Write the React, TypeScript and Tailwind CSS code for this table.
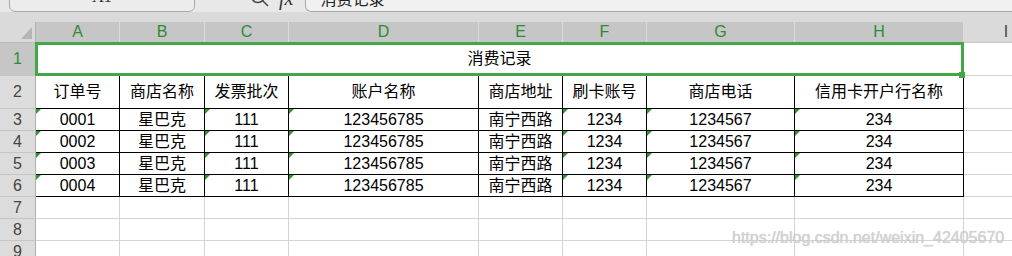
import React from "react";

const FONT = "font-['Liberation_Sans','Noto_Sans_CJK_SC',sans-serif]";

const headers = ["订单号", "商店名称", "发票批次", "账户名称", "商店地址", "刷卡账号", "商店电话", "信用卡开户行名称"];
const rows = [
  ["0001", "星巴克", "111", "123456785", "南宁西路", "1234", "1234567", "234"],
  ["0002", "星巴克", "111", "123456785", "南宁西路", "1234", "1234567", "234"],
  ["0003", "星巴克", "111", "123456785", "南宁西路", "1234", "1234567", "234"],
  ["0004", "星巴克", "111", "123456785", "南宁西路", "1234", "1234567", "234"],
];
const triCols = [0, 2, 3, 5, 6, 7];
const letters = ["A", "B", "C", "D", "E", "F", "G", "H"];

function Tri() {
  return (
    <svg className="absolute left-0 top-0" width="5" height="5" viewBox="0 0 5 5">
      <polygon points="0,0 5,0 0,5" fill="#2a9a2a" />
    </svg>
  );
}

function RowHead({ n, selected }: { n: number; selected?: boolean }) {
  return (
    <div
      className={
        "flex items-center justify-center border-r border-b border-r-[#b0b0b0] border-b-[#c4c4c4] text-[16px] " +
        (selected ? "bg-[#c6c6c6] text-[#2f8a36]" : "bg-[#dcdcdc] text-[#444]")
      }
    >
      {n}
    </div>
  );
}

export default function App() {
  return (
    <div className={"w-[1012px] h-[256px] overflow-hidden bg-white relative " + FONT}>
      {/* toolbar */}
      <div className="h-[12px] bg-[#e8e8e8] flex items-end overflow-hidden">
        <div className="ml-[9px] w-[186px] h-[40px] shrink-0 rounded-[6px] border border-[#a9a9a9] bg-[#ececec] flex items-end justify-center pb-[6px] text-[16px] leading-none text-[#333] font-['Liberation_Serif',serif]">
          A1
        </div>
        <div className="ml-[55px] mb-[5px] shrink-0">
          <svg width="19" height="19" viewBox="0 0 19 19" fill="none" stroke="#444" strokeWidth="1.5">
            <circle cx="8" cy="8" r="6.5" />
            <line x1="12.7" y1="12.7" x2="18" y2="18" />
          </svg>
        </div>
        <div className="ml-[10px] mb-[4px] shrink-0 text-[20px] leading-none italic text-[#333] font-['Liberation_Serif',serif]">
          fx
        </div>
        <div className="ml-[12px] flex-1 h-[40px] rounded-bl-[6px] border border-r-0 border-[#a9a9a9] bg-[#f1f1f1] flex items-end pl-[14px] pb-[3px] text-[16px] leading-none text-[#222]">
          消费记录
        </div>
      </div>
      <div className="h-[10px] bg-[#dadada]" />

      {/* grid */}
      <div className="grid grid-cols-[36px_84px_85px_84px_190px_84px_84px_148px_169px_84px] grid-rows-[21px_33px_33px_22px_22px_22px_22px_22px_22px_22px]">
        {/* column header */}
        <div className="relative bg-[#dadada] border-r border-b border-r-[#b0b0b0] border-b-[#b8b8b8]">
          <svg className="absolute left-[21px] top-[5px]" width="11" height="12" viewBox="0 0 11 12">
            <polygon points="11,0 11,12 0,12" fill="#b5b5b5" />
          </svg>
        </div>
        {letters.map((l) => (
          <div
            key={l}
            className="flex items-center justify-center bg-[#c6c6c6] border-r border-b border-r-[#dcdcdc] border-b-[#b8b8b8] text-[16px] text-[#2f8a36]"
          >
            {l}
          </div>
        ))}
        <div className="flex items-center justify-center bg-[#dadada] border-b border-b-[#c8c8c8] text-[16px] text-[#444]">
          I
        </div>

        {/* row 1 */}
        <RowHead n={1} selected />
        <div className="col-span-8 relative flex items-center justify-center border-r border-b border-black text-[16px] text-black">
          消费记录
          <div className="absolute -top-[1px] -left-[1px] -right-[1px] -bottom-[1px] border-[3px] border-[#45a647] z-10 pointer-events-none">
            <div className="absolute -right-[4px] -bottom-[5px] w-[6px] h-[6px] bg-[#45a647]" />
          </div>
        </div>
        <div className="border-b border-b-[#d4d4d4]" />

        {/* row 2 */}
        <RowHead n={2} />
        {headers.map((h) => (
          <div key={h} className="flex items-center justify-center border-r border-b border-black text-[16px] text-black">
            {h}
          </div>
        ))}
        <div className="border-b border-b-[#d4d4d4]" />

        {/* data rows */}
        {rows.map((r, i) => (
          <React.Fragment key={i}>
            <RowHead n={i + 3} />
            {r.map((v, j) => (
              <div
                key={j}
                className="relative flex items-center justify-center border-r border-b border-black text-[16px] text-black"
              >
                {triCols.includes(j) && <Tri />}
                {v}
              </div>
            ))}
            <div className="border-b border-b-[#d4d4d4]" />
          </React.Fragment>
        ))}

        {/* empty rows */}
        {[7, 8, 9].map((n) => (
          <React.Fragment key={n}>
            <RowHead n={n} />
            {letters.map((l) => (
              <div key={l} className="border-r border-b border-[#d4d4d4]" />
            ))}
            <div className="border-b border-b-[#d4d4d4]" />
          </React.Fragment>
        ))}
      </div>

      {/* watermark */}
      <div className="absolute left-[732px] top-[230px] text-[16px] leading-none text-[#d2d2d2] font-['Liberation_Sans',sans-serif] pointer-events-none [text-shadow:0_0_1px_rgba(150,150,150,0.5)]">
        https://blog.csdn.net/weixin_42405670
      </div>
    </div>
  );
}
